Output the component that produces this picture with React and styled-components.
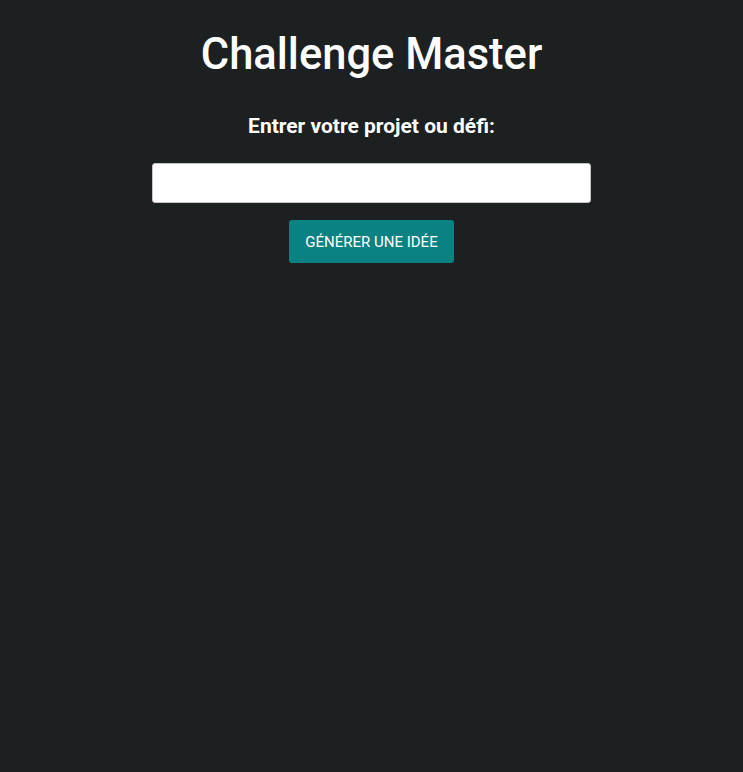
import React from 'react';
import styled, { createGlobalStyle } from 'styled-components';

const GlobalStyle = createGlobalStyle`
  html, body {
    margin: 0;
    padding: 0;
    background: #1d2020;
    font-family: Roboto, 'Noto Sans', sans-serif;
  }
`;

export default function App() {
  return (
    <Page>
      <GlobalStyle />
      <Title>Challenge Master</Title>
      <Label htmlFor="project">Entrer votre projet ou défi:</Label>
      <Input id="project" type="text" />
      <Button type="button">Générer une idée</Button>
    </Page>
  );
}

const Page = styled.div`
  display: flex;
  flex-direction: column;
  align-items: center;
  padding-top: 29px;
  min-height: 772px;
  box-sizing: border-box;
  color: #fff;
`;

const Title = styled.h1`
  margin: 0;
  font-size: 43.5px;
  font-weight: 500;
  line-height: 52px;
`;

const Label = styled.label`
  margin-top: 31px;
  font-size: 21px;
  font-weight: 700;
  line-height: 28px;
`;

const Input = styled.input`
  margin-top: 23px;
  width: 439px;
  height: 40px;
  box-sizing: border-box;
  border: 1px solid #c4c4c4;
  border-radius: 3px;
  background: #fff;
  font-family: Roboto, sans-serif;
  font-size: 16px;
  padding: 0 10px;
`;

const Button = styled.button`
  margin-top: 17px;
  width: 165px;
  height: 43px;
  border: none;
  border-radius: 3px;
  background: #0b8282;
  color: #fff;
  font-family: Roboto, sans-serif;
  font-size: 15px;
  font-weight: 400;
  text-transform: uppercase;
`;
